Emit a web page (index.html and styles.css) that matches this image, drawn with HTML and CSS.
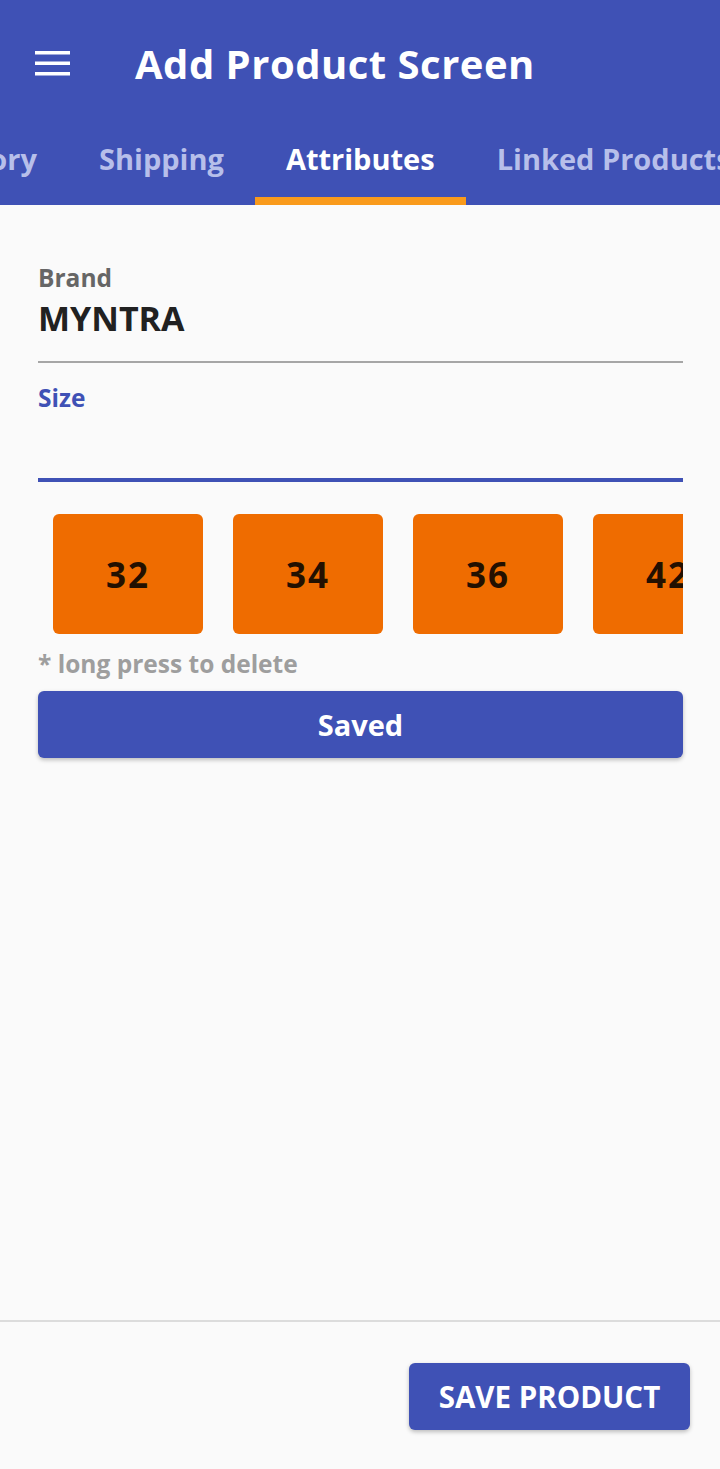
FILE: index.html
```html
<!DOCTYPE html>
<html>
<head>
<meta charset="utf-8">
<link rel="stylesheet" href="styles.css">
</head>
<body>
<div class="screen">
  <header class="appbar">
    <div class="toolbar">
      <button class="menu-btn" aria-label="menu">
        <svg width="36" height="26" viewBox="0 0 36 26"><rect x="0" y="0" width="35" height="3.5" fill="#fff"/><rect x="0" y="10.5" width="35" height="3.5" fill="#fff"/><rect x="0" y="21" width="35" height="3.5" fill="#fff"/></svg>
      </button>
      <h1 class="title">Add Product Screen</h1>
    </div>
    <nav class="tabs">
      <div class="tab tab-clipped">Category</div>
      <div class="tab">Shipping</div>
      <div class="tab active">Attributes</div>
      <div class="tab">Linked Products</div>
    </nav>
  </header>

  <main class="content">
    <div class="field">
      <div class="label">Brand</div>
      <div class="value">MYNTRA</div>
      <div class="underline"></div>
    </div>
    <div class="field focused">
      <div class="label label-focus">Size</div>
      <div class="value empty"></div>
      <div class="underline underline-focus"></div>
    </div>
    <div class="chips">
      <div class="chip">32</div>
      <div class="chip">34</div>
      <div class="chip">36</div>
      <div class="chip">42</div>
    </div>
    <div class="hint">* long press to delete</div>
    <button class="btn btn-block">Saved</button>
  </main>

  <footer class="footer">
    <button class="btn btn-save">SAVE PRODUCT</button>
  </footer>
</div>
</body>
</html>
```

FILE: styles.css
```css
* { box-sizing: border-box; }
html, body { margin: 0; padding: 0; }
body {
  background: #fafafa;
  font-family: "Open Sans", Roboto, sans-serif;
  font-weight: 700;
  width: 720px;
  height: 1469px;
  overflow: hidden;
}
.screen {
  display: flex;
  flex-direction: column;
  height: 1469px;
}
.appbar {
  background: #3f51b5;
  height: 205px;
  display: flex;
  flex-direction: column;
}
.toolbar {
  height: 120px;
  display: flex;
  align-items: center;
  padding-left: 35px;
  padding-top: 8px;
}
.menu-btn {
  background: none;
  border: 0;
  padding: 0;
  width: 36px;
  height: 26px;
  display: flex;
}
.title {
  margin: 0 0 0 64px;
  color: #fff;
  font-size: 40px;
  line-height: 50px;
  letter-spacing: 0.5px;
  font-weight: 700;
}
.tabs {
  display: flex;
  height: 85px;
  overflow: hidden;
  white-space: nowrap;
}
.tab {
  flex: none;
  padding: 0 31px;
  font-size: 29px;
  color: #b7bfea;
  border-bottom: 8px solid transparent;
  display: flex;
  align-items: center;
}
.tab-clipped {
  width: 68px;
  justify-content: flex-end;
  overflow: hidden;
  padding-left: 0;
}
.tab.active {
  color: #fff;
  border-bottom-color: #f99a1b;
}
.content {
  flex: 1;
  padding: 58px 37px 0 38px;
  display: flex;
  flex-direction: column;
}
.field { display: flex; flex-direction: column; }
.label {
  font-size: 24.5px;
  color: #666;
  line-height: 30px;
}
.label-focus { color: #3f51b5; }
.value {
  font-size: 34px;
  color: #212121;
  line-height: 40px;
  height: 40px;
  margin-top: 5px;
}
.value.empty { height: 48px; }
.underline {
  height: 2px;
  background: #a6a6a6;
  margin-top: 23px;
  margin-bottom: 20px;
}
.underline-focus {
  height: 4px;
  background: #3f51b5;
  margin-top: 12px;
  margin-bottom: 32px;
}
.chips {
  display: flex;
  gap: 30px;
  padding-left: 15px;
  overflow: hidden;
}
.chip {
  flex: none;
  width: 150px;
  height: 120px;
  border-radius: 6px;
  background: #ef6c00;
  color: #231000;
  font-size: 35px;
  letter-spacing: 2px;
  display: flex;
  align-items: center;
  justify-content: center;
}
.hint {
  margin-top: 15px;
  font-size: 24.5px;
  color: #9e9e9e;
  line-height: 30px;
}
.btn {
  font-family: "Open Sans", Roboto, sans-serif;
  font-weight: 700;
  border: 0;
  background: #3f51b5;
  color: #fff;
  border-radius: 6px;
  box-shadow: 0 2px 4px rgba(0,0,0,0.25);
}
.btn-block {
  margin-top: 12px;
  height: 67px;
  font-size: 29px;
  width: 100%;
}
.footer {
  height: 149px;
  border-top: 2px solid #dcdcdc;
  display: flex;
  justify-content: flex-end;
  padding: 41px 30px 0 0;
}
.btn-save {
  width: 281px;
  height: 67px;
  font-size: 29.5px;
}
```
